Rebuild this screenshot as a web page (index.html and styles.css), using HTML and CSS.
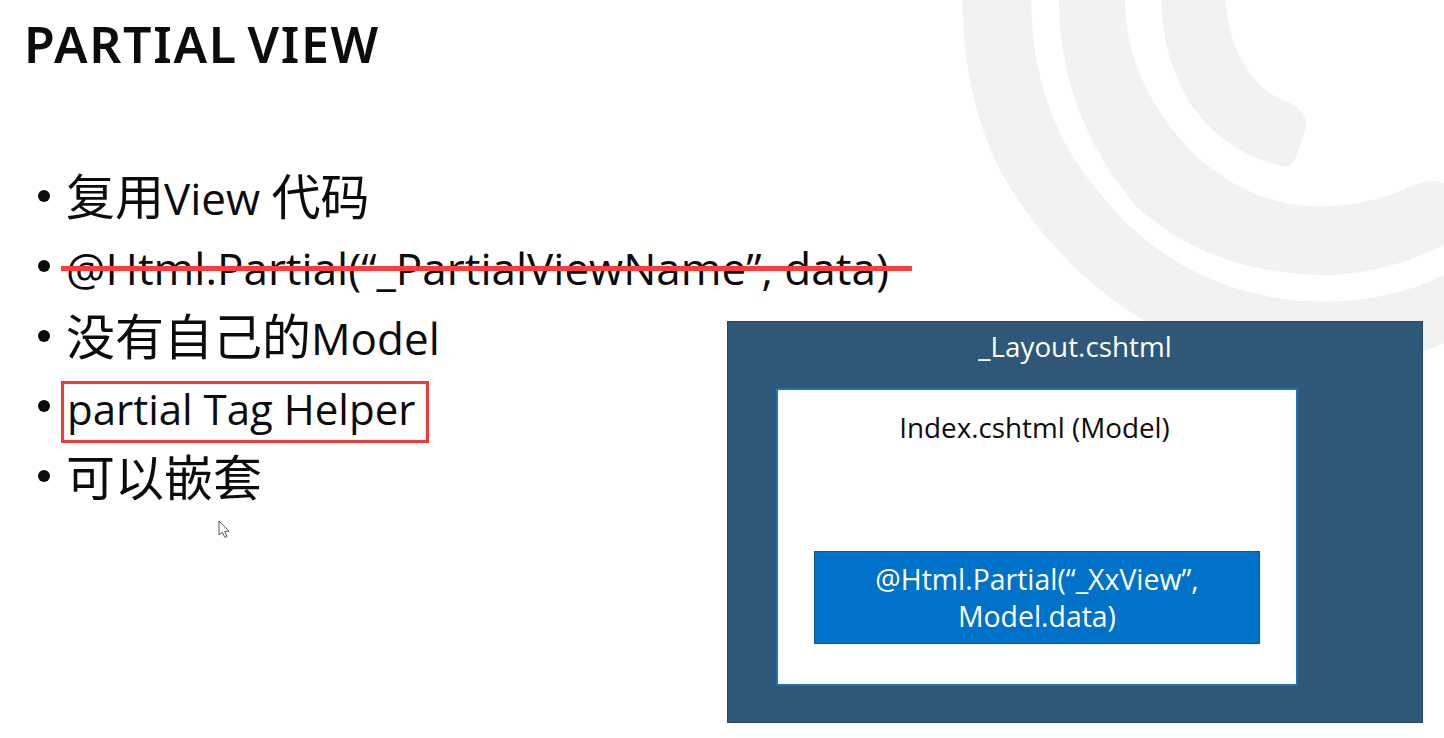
FILE: index.html
```html
<!DOCTYPE html>
<html lang="zh-CN">
<head>
<meta charset="utf-8">
<title>Partial View</title>
<link rel="stylesheet" href="styles.css">
</head>
<body>
<main class="slide">
  <svg class="watermark" viewBox="0 0 1512 1080" aria-hidden="true">
    <path d="M68 0C68 240 130 450 235 600C350 770 480 880 610 960L1100 1200L1512 1030L1512 825C1400 880 1280 905 1150 905C900 905 650 800 480 580C340 420 274 220 274 0Z"/>
    <path d="M357 0C357 220 430 430 590 620C740 760 950 825 1150 825C1280 825 1400 790 1512 735L1512 550C1480 535 1440 545 1400 565C1320 600 1230 620 1140 620C990 620 850 550 750 450C630 320 555 170 555 0Z"/>
    <path d="M665 0C665 130 700 220 750 310C800 380 860 430 910 455C950 475 990 490 1030 500C1055 503 1065 480 1072 460L1095 390C1105 350 1085 325 1050 310C990 285 950 255 920 205C880 150 865 80 855 0Z"/>
  </svg>
  <section class="content">
    <h1 class="title">PARTIAL VIEW</h1>
    <ul class="points">
      <li class="point"><span><span class="cjk">复用</span>View <span class="cjk">代码</span></span></li>
      <li class="point point-struck">@Html.Partial(“_PartialViewName”, data)</li>
      <li class="point"><span><span class="cjk">没有自己的</span>Model</span></li>
      <li class="point"><span class="boxed">partial Tag Helper</span></li>
      <li class="point"><span class="cjk">可以嵌套</span></li>
    </ul>
  </section>
  <section class="diagram">
    <div class="layout-box">
      <div class="layout-name">_Layout.cshtml</div>
      <div class="index-box">
        <div class="index-name">Index.cshtml (Model)</div>
        <div class="partial-box">@Html.Partial(“_XxView”,<br>Model.data)</div>
      </div>
    </div>
  </section>
  <svg class="cursor" viewBox="0 0 13 19" aria-hidden="true">
    <path d="M1 1V15L4.300 12.200L6.800 17.500L9 16.500L6.700 11.500L11 11.200Z"/>
  </svg>
</main>
</body>
</html>
```
FILE: styles.css
```css
* {
  box-sizing: border-box;
}

html,
body {
  margin: 0;
  height: 100%;
  background: #fff;
}

.slide {
  position: relative;
  display: flex;
  width: 1444px;
  height: 738px;
  overflow: hidden;
  background: #fff;
  color: #0c0c0c;
  font-family: "Open Sans", "Noto Sans CJK SC", sans-serif;
}

.watermark {
  position: absolute;
  top: 0;
  left: 940px;
  width: 504px;
  height: 360px;
  fill: #f2f2f2;
}

.content {
  position: relative;
  flex: 0 0 727px;
  min-width: 0;
  padding: 13px 0 0 24px;
}

.title {
  margin: 0;
  font-family: "Noto Sans", sans-serif;
  font-size: 50px;
  line-height: 62px;
  font-weight: 600;
  letter-spacing: 1.700px;
  word-spacing: -5px;
  white-space: nowrap;
}

.points {
  margin: 88px 0 0;
  padding: 0 0 0 14px;
  list-style: none;
}

.point {
  position: relative;
  display: flex;
  align-items: center;
  gap: 16px;
  height: 70px;
  font-size: 44px;
  line-height: 70px;
  white-space: nowrap;
}

.point::before {
  content: "";
  flex: none;
  width: 12px;
  height: 12px;
  margin-top: -4px;
  border-radius: 50%;
  background: #0c0c0c;
}

.point > span:not(.boxed) {
  margin-top: -2px;
}

.cjk {
  font-size: 49px;
}

.point-struck::after {
  content: "";
  position: absolute;
  top: 33px;
  left: 23px;
  width: 851px;
  height: 5px;
  background: #ff3b3b;
}

.boxed {
  display: block;
  width: 368px;
  height: 62px;
  margin-top: 8px;
  margin-left: -5px;
  padding-left: 3px;
  border: 3px solid #f4393c;
  font-size: 42px;
  line-height: 49px;
}

.diagram {
  position: relative;
  flex: none;
  padding-top: 321px;
}

.layout-box {
  width: 696px;
  height: 402px;
  padding-left: 48px;
  border: 1px solid #1f4a69;
  background: #2e5778;
  color: #fff;
}

.layout-name {
  width: 598px;
  height: 66px;
  font-size: 27.800px;
  line-height: 49px;
  text-align: center;
}

.index-box {
  width: 522px;
  height: 298px;
  padding-left: 36px;
  border: 2px solid #1d71b5;
  background: #fff;
  color: #0c0c0c;
}

.index-name {
  width: 441px;
  height: 161px;
  font-size: 27.800px;
  line-height: 75px;
  text-align: center;
}

.partial-box {
  display: flex;
  align-items: center;
  justify-content: center;
  width: 446px;
  height: 93px;
  border: 1px solid #0f5590;
  background: #0072c9;
  color: #fff;
  font-size: 28.400px;
  line-height: 37px;
  text-align: center;
}

.cursor {
  position: absolute;
  top: 520px;
  left: 218px;
  width: 13px;
  height: 19px;
  fill: #fff;
  stroke: #555;
  stroke-width: 1;
}
```
